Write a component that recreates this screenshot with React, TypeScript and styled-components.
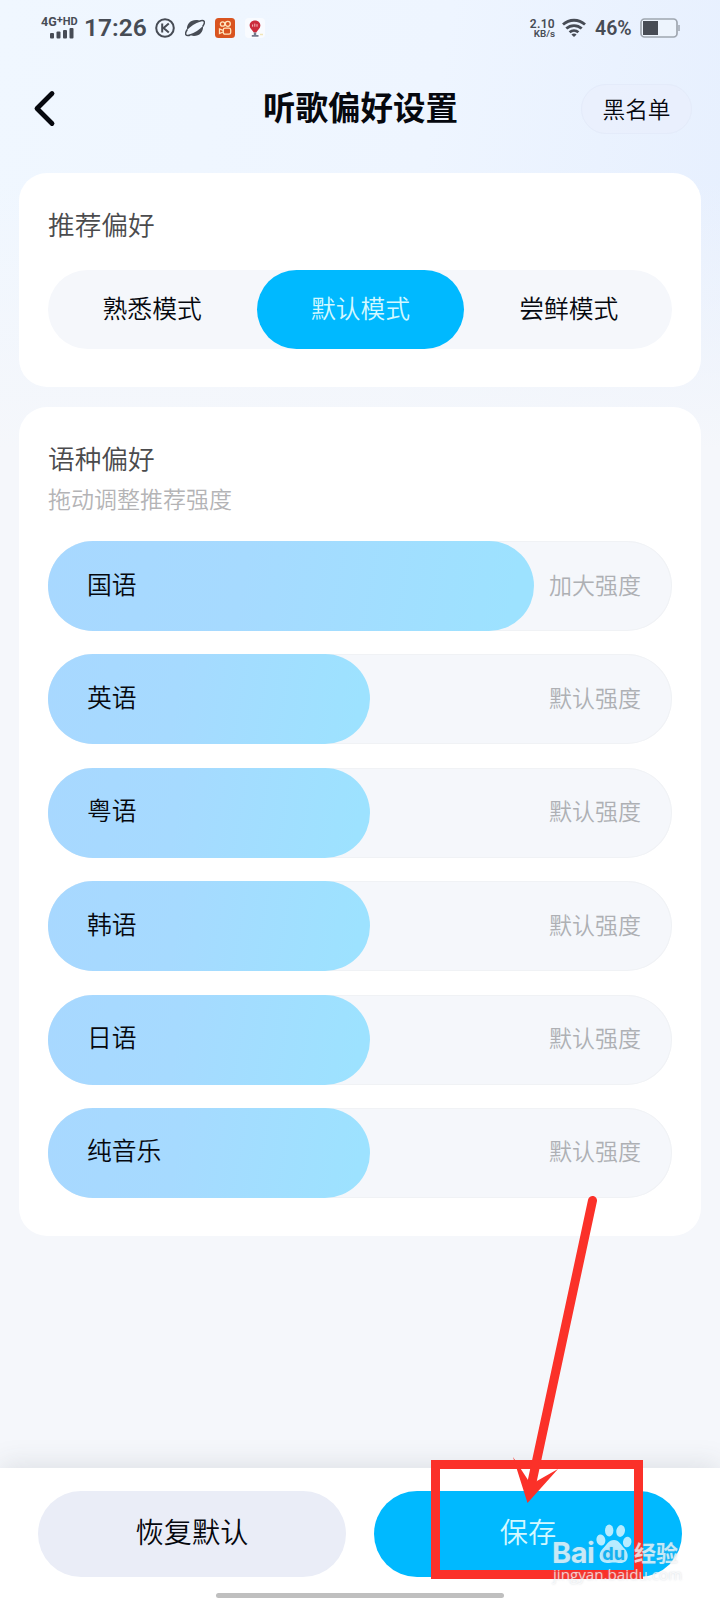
import React from "react";
import styled, { createGlobalStyle } from "styled-components";

const Global = createGlobalStyle`
  * { box-sizing: border-box; }
  body { margin: 0; background: #f5f7fb; }
  button { border: 0; padding: 0; margin: 0; font: inherit; color: inherit; background: none; }
`;

const Page = styled.div`
  position: relative;
  display: flex;
  flex-direction: column;
  width: 720px;
  height: 1600px;
  overflow: hidden;
  color: #06080e;
  font-family: "Noto Sans CJK SC", sans-serif;
  font-weight: 350;
  background:
    linear-gradient(180deg, rgba(245, 247, 251, 0) 0, rgba(245, 247, 251, 0) 180px, #f5f7fb 450px),
    linear-gradient(100deg, #f0f7ff 0%, #eef5ff 45%, #e6effe 80%, #e4eefe 100%);
`;

const StatusBar = styled.div`
  display: flex;
  justify-content: space-between;
  height: 56px;
  padding: 0 40px 0 41px;
  color: #474c55;
  font-family: Roboto, sans-serif;
`;

const StatusGroup = styled.div`
  display: flex;
  align-items: center;
  height: 56px;
`;

const Signal = styled.div`
  display: flex;
  flex-direction: column;
  width: 43px;
  padding-bottom: 2px;
  font-size: 12.5px;
  font-weight: 700;
  line-height: 12px;
  white-space: nowrap;

  svg { display: block; margin-left: 8px; margin-top: -1px; }
  sup { font-size: 11px; line-height: 0; vertical-align: 3px; }
  small { font-size: 11px; vertical-align: 1px; }
`;

const Clock = styled.div`
  width: 71px;
  font-size: 24.5px;
  font-weight: 600;
  line-height: 56px;
`;

const StatusIcons = styled.div`
  display: flex;
  align-items: center;
  gap: 10px;
`;

const NetSpeed = styled.div`
  width: 26px;
  margin-right: 7px;
  font-size: 9.8px;
  font-weight: 600;
  line-height: 10px;
  text-align: right;
  white-space: nowrap;

  b { display: block; padding-top: 1px; font-size: 12px; font-weight: 600; letter-spacing: 0.3px; }
`;

const Percent = styled.div`
  width: 45px;
  margin-left: 9px;
  font-size: 19.5px;
  font-weight: 600;
  line-height: 58px;
  padding-top: 2px;
`;

const Header = styled.header`
  display: grid;
  grid-template-columns: 111px 1fr 111px;
  align-items: center;
  height: 117px;
  padding: 0 28px 14px 32px;
`;

const BackButton = styled.button`
  justify-self: start;
  display: flex;
`;

const Title = styled.h1`
  margin: 0;
  padding: 0 3px 4px 0;
  font-size: 32.5px;
  font-weight: 700;
  line-height: 48px;
  text-align: center;
  white-space: nowrap;
`;

const BlacklistButton = styled.button`
  height: 50px;
  margin-top: 2px;
  border: 1px solid #e4ebfa;
  border-radius: 25px;
  background: rgba(234, 239, 252, 0.6);
  font-size: 22.7px;
  line-height: 48px;
`;

const Card = styled.section<{ $height: number }>`
  height: ${(p) => p.$height}px;
  margin: 0 19px 20px;
  padding: 33px 29px 0;
  border-radius: 28px;
  background: #fff;
`;

const CardTitle = styled.h2`
  margin: 0;
  color: #4b4b4d;
  font-size: 26.7px;
  font-weight: 350;
  line-height: 36px;
`;

const Hint = styled.p`
  margin: 4px 0 25px;
  color: #b4b4b6;
  font-size: 23px;
  line-height: 36px;
  height: 36px;
`;

const Segments = styled.div`
  display: grid;
  grid-template-columns: repeat(3, 1fr);
  column-gap: 2px;
  height: 79px;
  margin-top: 28px;
  padding-left: 1px;
  border-radius: 40px;
  background: #f5f7fb;
`;

const Segment = styled.button<{ $active?: boolean }>`
  padding-bottom: 6px;
  border-radius: 40px;
  background: ${(p) => (p.$active ? "#00b9ff" : "transparent")};
  color: ${(p) => (p.$active ? "#d3f8ff" : "#06080e")};
  font-size: 24.8px;
`;

const SliderList = styled.div`
  display: flex;
  flex-direction: column;
  gap: 23.4px;
`;

const Track = styled.div`
  display: grid;
  grid-template-columns: 1fr auto;
  align-items: center;
  height: 90px;
  padding-right: 31px;
  border-radius: 45px;
  background: #f5f7fb;
  box-shadow: inset 0 0 0 1px #f0f2f5;
`;

const Fill = styled.div`
  display: flex;
  align-items: center;
  height: 90px;
  padding: 0 0 7px 39px;
  border-radius: 45px;
  background: linear-gradient(100deg, #a8d8ff 0%, #a6daff 40%, #9de2ff 95%);
  font-size: 24.8px;
`;

const Strength = styled.span`
  padding-bottom: 5px;
  color: #aeb0b4;
  font-size: 23px;
`;

const Footer = styled.footer`
  display: grid;
  grid-template-columns: 308px 308px;
  grid-template-rows: 86px 5px;
  column-gap: 28px;
  row-gap: 16px;
  height: 132px;
  margin-top: auto;
  padding: 23px 38px 0;
  background: #fff;
  box-shadow: 0 -3px 26px rgba(60, 70, 80, 0.13);
`;

const FooterButton = styled.button<{ $primary?: boolean }>`
  padding-bottom: 7px;
  border-radius: 43px;
  background: ${(p) => (p.$primary ? "#00b9ff" : "#eaedf7")};
  color: ${(p) => (p.$primary ? "#d3f8ff" : "#06080e")};
  font-size: 28.2px;
`;

const HomeIndicator = styled.div`
  grid-column: 1 / -1;
  justify-self: center;
  width: 288px;
  border-radius: 3px;
  background: #bfbfbf;
`;

const Annotation = styled.svg`
  position: absolute;
  left: 420px;
  top: 1190px;
  pointer-events: none;
`;

const Watermark = styled.div`
  position: absolute;
  left: 552px;
  top: 1522px;
  width: 132px;
  color: rgba(255, 255, 255, 0.72);
  text-shadow: 0 0 2px rgba(150, 165, 180, 0.45);
  font-family: "Open Sans", "Noto Sans CJK SC", sans-serif;
`;

const Brand = styled.div`
  display: flex;
  align-items: flex-end;
  height: 43px;
  font-weight: 700;
  white-space: nowrap;

  span { width: 44px; font-family: Inter, sans-serif; font-size: 29px; line-height: 25px; letter-spacing: -0.5px; }
  em { margin-left: 2px; font-style: normal; font-size: 22px; line-height: 27px; font-family: "Noto Sans CJK SC", sans-serif; }
  svg { margin-bottom: 1px; }
`;

const Site = styled.div`
  padding-left: 1px;
  font-size: 15.2px;
  font-weight: 400;
  line-height: 18px;
  white-space: nowrap;
`;

const languages = [
  { name: "国语", width: 486, strength: "加大强度" },
  { name: "英语", width: 322, strength: "默认强度" },
  { name: "粤语", width: 322, strength: "默认强度" },
  { name: "韩语", width: 322, strength: "默认强度" },
  { name: "日语", width: 322, strength: "默认强度" },
  { name: "纯音乐", width: 322, strength: "默认强度" },
];

const SignalBars = () => (
  <svg width="26" height="12" viewBox="0 0 26 12" fill="#474c55">
    <rect x="1" y="6" width="4" height="5.5" rx="1" />
    <rect x="7.5" y="4.5" width="4" height="7" rx="1" />
    <rect x="14" y="3" width="4" height="8.5" rx="1" />
    <rect x="20.5" y="1" width="4" height="10.5" rx="1" />
  </svg>
);

const CircleK = () => (
  <svg width="20" height="20" viewBox="0 0 20 20" fill="none" stroke="#474c55" strokeWidth="2">
    <circle cx="10" cy="10" r="8.8" />
    <path d="M7.2 5.5v9M13.8 5.6 8.6 10l5.2 4.4" />
  </svg>
);

const Planet = () => (
  <svg width="20" height="20" viewBox="0 0 20 20">
    <path d="M2 12C1.400 6 5.500 2 11 2c1.800 0 3.500.5 4.800 1.400C10 5 5.500 8.500 2 12Z" fill="#474c55" />
    <path d="M18 8C18.600 14 14.500 18 9 18c-1.800 0-3.500-.5-4.800-1.400C10 15 14.500 11.500 18 8Z" fill="#474c55" />
    <path d="M2.300 11.500C-.8 16 .4 18.600 5.500 17M14.500 3c5.100-1.600 6.300 1 3.200 5.500" fill="none" stroke="#474c55" strokeWidth="1.500" />
  </svg>
);

const CameraApp = () => (
  <svg width="20" height="20" viewBox="0 0 20 20">
    <rect width="20" height="20" rx="3.5" fill="#d95420" />
    <g fill="none" stroke="#ffe5bd" strokeWidth="1.3">
      <circle cx="7.6" cy="6" r="2.2" />
      <circle cx="12.8" cy="5.8" r="2.5" />
      <rect x="8.3" y="10.2" width="7.4" height="6" rx="1.7" />
      <path d="M8 12.4 4.5 11v4.6L8 14" />
    </g>
  </svg>
);

const Balloon = () => (
  <svg width="20" height="20" viewBox="0 0 20 20">
    <rect width="20" height="20" rx="4" fill="#f9fbff" />
    <path d="M10 2.4c3.2 0 5.4 2.2 5.4 5 0 2.8-2.6 4.4-4.2 7.2H8.8c-1.6-2.8-4.2-4.4-4.2-7.2 0-2.8 2.2-5 5.4-5Z" fill="#cb2c3c" />
    <path d="M7.6 6.5v2.2M9.8 5.6v3.1M12 6.2v2.5" stroke="#f6bcc0" strokeWidth="1" />
    <path d="M8.8 14.5h2.4v2.5h2.3v1.7H6.8v-1.7h2Z" fill="#72798c" />
    <path d="M15 16.5h3" stroke="#f1e5b8" strokeWidth="1.5" />
  </svg>
);

const Wifi = () => (
  <svg width="24" height="20" viewBox="0 0 24 20" fill="none" stroke="#474c55" strokeWidth="2.8">
    <path d="M1 6.6C7.2.8 16.8.8 23 6.6" />
    <path d="M4.3 10.6c4.4-4.1 11-4.1 15.4 0" />
    <path d="M7.6 14.3c2.6-2.3 6.2-2.3 8.8 0" />
    <path d="M9.4 16.4c1.6-1.3 3.6-1.3 5.2 0L12 19Z" fill="#474c55" stroke="none" />
  </svg>
);

const Battery = () => (
  <svg width="40" height="20" viewBox="0 0 40 20">
    <rect x="1" y="1" width="36" height="18" rx="3.5" fill="#edf4fd" stroke="#9fa6b0" strokeWidth="1.7" />
    <rect x="3" y="3" width="15" height="14" fill="#474c55" />
    <path d="M39 7v6" stroke="#9fa6b0" strokeWidth="1.5" />
  </svg>
);

const Paw = () => (
  <svg width="36" height="40" viewBox="0 0 36 40">
    <g fill="#fff" fillOpacity=".72">
      <ellipse cx="4.9" cy="16" rx="4.4" ry="5.6" transform="rotate(-12 4.9 16)" />
      <ellipse cx="13.2" cy="6.5" rx="4.2" ry="6" />
      <ellipse cx="24.6" cy="7" rx="4.3" ry="6" transform="rotate(12 24.6 7)" />
      <ellipse cx="31.2" cy="18" rx="4.2" ry="5.4" transform="rotate(10 31.2 18)" />
      <path d="M18 16c5 0 7 5 10.500 8.500 5 5 4.500 14.500-4 14.500-3 0-4-.6-6.500-.6S14 39 11 39C3 39 1.500 30 6.500 25 10.500 21 12.500 16 18 16Z" />
    </g>
    <text x="17.6" y="36" textAnchor="middle" fontFamily="Inter, sans-serif" fontSize="18" fontWeight="700" fill="#13b2f2">du</text>
  </svg>
);

export default function App() {
  return (
    <Page>
      <Global />
      <StatusBar>
        <StatusGroup>
          <Signal>
            <div>4G<sup>+</sup><small>HD</small></div>
            <SignalBars />
          </Signal>
          <Clock>17:26</Clock>
          <StatusIcons>
            <CircleK />
            <Planet />
            <CameraApp />
            <Balloon />
          </StatusIcons>
        </StatusGroup>
        <StatusGroup>
          <NetSpeed><b>2.10</b>KB/s</NetSpeed>
          <Wifi />
          <Percent>46%</Percent>
          <Battery />
        </StatusGroup>
      </StatusBar>

      <Header>
        <BackButton aria-label="返回">
          <svg width="26" height="38" viewBox="0 0 26 38" fill="none" stroke="#06080e" strokeWidth="4.8" strokeLinecap="round" strokeLinejoin="round">
            <path d="M20 4.500 5 19.500 20 34.500" />
          </svg>
        </BackButton>
        <Title>听歌偏好设置</Title>
        <BlacklistButton>黑名单</BlacklistButton>
      </Header>

      <Card $height={214}>
        <CardTitle>推荐偏好</CardTitle>
        <Segments>
          <Segment>熟悉模式</Segment>
          <Segment $active>默认模式</Segment>
          <Segment>尝鲜模式</Segment>
        </Segments>
      </Card>

      <Card $height={829}>
        <CardTitle>语种偏好</CardTitle>
        <Hint>拖动调整推荐强度</Hint>
        <SliderList>
          {languages.map((l) => (
            <Track key={l.name}>
              <Fill style={{ width: l.width }}>{l.name}</Fill>
              <Strength>{l.strength}</Strength>
            </Track>
          ))}
        </SliderList>
      </Card>

      <Footer>
        <FooterButton>恢复默认</FooterButton>
        <FooterButton $primary>保存</FooterButton>
        <HomeIndicator />
      </Footer>

      <Annotation width="240" height="400" viewBox="420 1190 240 400">
        <rect x="435.5" y="1464.5" width="203" height="110" fill="none" stroke="#fb3129" strokeWidth="9" />
        <path d="M592.5 1200.5 532 1482" stroke="#fb3129" strokeWidth="9" strokeLinecap="round" />
        <path d="M513 1457 528 1480 536 1481.5 558 1469 527.5 1503Z" fill="#fb3129" />
      </Annotation>

      <Watermark>
        <Brand>
          <span>Bai</span>
          <Paw />
          <em>经验</em>
        </Brand>
        <Site>jingyan.baidu.com</Site>
      </Watermark>
    </Page>
  );
}
